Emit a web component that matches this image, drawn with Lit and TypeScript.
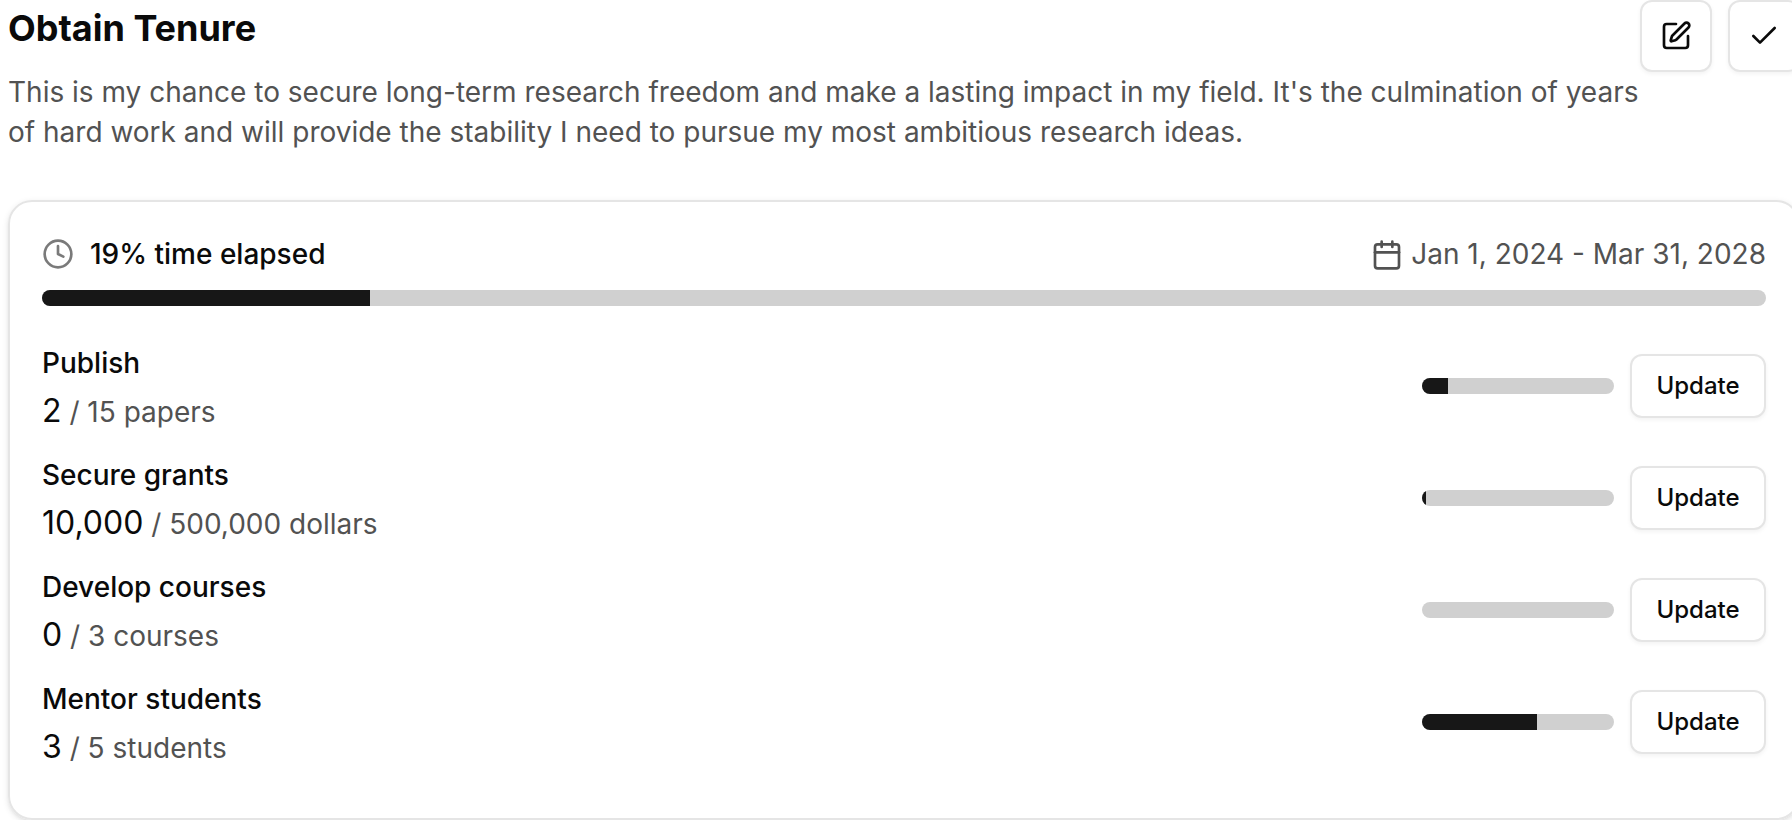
import { LitElement, html, css, svg } from "lit";
import { customElement, property } from "lit/decorators.js";

interface Goal {
  name: string;
  current: number;
  target: number;
  unit: string;
}

const goals: Goal[] = [
  { name: "Publish", current: 2, target: 15, unit: "papers" },
  { name: "Secure grants", current: 10000, target: 500000, unit: "dollars" },
  { name: "Develop courses", current: 0, target: 3, unit: "courses" },
  { name: "Mentor students", current: 3, target: 5, unit: "students" },
];

const icons = {
  edit: svg`<path d="M12 3H5a2 2 0 0 0-2 2v14a2 2 0 0 0 2 2h14a2 2 0 0 0 2-2v-7"/><path d="M18.375 2.625a1 1 0 0 1 3 3l-9.013 9.014a2 2 0 0 1-.853.505l-2.873.84a.5.5 0 0 1-.62-.62l.84-2.873a2 2 0 0 1 .506-.852z"/>`,
  check: svg`<path d="M20 6 9 17l-5-5"/>`,
  clock: svg`<circle cx="12" cy="12" r="10"/><path d="M12 6v6l4 2"/>`,
  calendar: svg`<path d="M8 2v4M16 2v4"/><rect width="18" height="18" x="3" y="4" rx="2"/><path d="M3 10h18"/>`,
};

const icon = (name: keyof typeof icons) => html`<svg class="icon ${name}" viewBox="0 0 24 24" aria-hidden="true">${icons[name]}</svg>`;

const format = (n: number) => n.toLocaleString("en-US");

@customElement("progress-bar")
export class ProgressBar extends LitElement {
  static styles = css`
    :host {
      display: block;
    }
    .track {
      height: 16px;
      border-radius: 8px;
      overflow: hidden;
      background: #d0d0d0;
    }
    .fill {
      height: 100%;
      background: #171717;
    }
  `;

  @property({ type: Number }) value = 0;
  @property() label = "";

  render() {
    return html`<div class="track" role="progressbar" aria-label=${this.label} aria-valuemin="0" aria-valuemax="100" aria-valuenow=${Math.round(this.value)}>
      <div class="fill" style="width:${this.value}%"></div>
    </div>`;
  }
}

@customElement("app-root")
export class AppRoot extends LitElement {
  static styles = css`
    :host {
      display: block;
      overflow: hidden;
      background: #fff;
      color: #0a0a0a;
      font: 400 28px/40px Inter, sans-serif;
      font-optical-sizing: none;
    }
    * {
      box-sizing: border-box;
    }
    .page {
      width: 100%;
      margin-left: 8px;
      display: grid;
      gap: 48px;
    }
    .header {
      display: flex;
      align-items: flex-start;
    }
    .intro {
      flex: 1;
      min-width: 0;
      display: grid;
      gap: 16px;
    }
    h1,
    h2,
    p {
      margin: 0;
    }
    h1 {
      font-size: 36px;
      line-height: 56px;
      font-weight: 700;
    }
    .muted {
      color: #525252;
    }
    .actions {
      display: flex;
      gap: 16px;
    }
    button {
      font: inherit;
      color: inherit;
      background: #fff;
      border: 2px solid #e5e5e5;
      border-radius: 12px;
      box-shadow: 0 2px 4px rgba(0, 0, 0, 0.05);
    }
    .square {
      width: 72px;
      height: 72px;
      padding: 0;
      display: grid;
      place-items: center;
    }
    .update {
      min-width: 136px;
      height: 64px;
      padding: 0 24px;
      font-size: 24px;
      line-height: 32px;
      font-weight: 500;
    }
    .icon {
      display: block;
      flex: none;
      width: 32px;
      height: 32px;
      fill: none;
      stroke: currentColor;
      stroke-width: 2;
      stroke-linecap: round;
      stroke-linejoin: round;
    }
    .clock {
      color: #7a7a7a;
    }
    .card {
      border: 2px solid #e5e5e5;
      border-radius: 24px;
      padding: 32px 32px 48px;
      box-shadow: 0 2px 6px rgba(0, 0, 0, 0.1), 0 2px 4px -2px rgba(0, 0, 0, 0.1);
      display: grid;
      gap: 32px;
    }
    .timeline {
      display: grid;
      gap: 16px;
    }
    .summary {
      display: flex;
      justify-content: space-between;
    }
    .elapsed {
      display: flex;
      align-items: center;
      gap: 16px;
      font-weight: 500;
    }
    .calendar {
      display: inline-block;
      vertical-align: text-bottom;
    }
    .goals {
      list-style: none;
      margin: 0;
      padding: 0;
      display: grid;
      gap: 16px;
    }
    .goal {
      display: flex;
      align-items: center;
      justify-content: space-between;
    }
    .goal h2 {
      font-size: 28px;
      line-height: 50px;
      font-weight: 500;
    }
    .amount {
      font-size: 32px;
      line-height: 46px;
    }
    .target {
      font-size: 28px;
      line-height: 40px;
    }
    .controls {
      display: flex;
      align-items: center;
      gap: 16px;
    }
    .meter {
      width: 192px;
    }
  `;

  private renderGoal(goal: Goal) {
    return html`<li class="goal">
      <div>
        <h2>${goal.name}</h2>
        <p class="amount">${format(goal.current)}<span class="target muted"> / ${format(goal.target)} ${goal.unit}</span></p>
      </div>
      <div class="controls">
        <progress-bar class="meter" label=${goal.name} .value=${(goal.current / goal.target) * 100}></progress-bar>
        <button class="update" type="button">Update</button>
      </div>
    </li>`;
  }

  render() {
    return html`<main class="page">
      <header class="header">
        <div class="intro">
          <h1>Obtain Tenure</h1>
          <p class="muted">This is my chance to secure long-term research freedom and make a lasting impact in my field. It's the culmination of years of hard work and will provide the stability I need to pursue my most ambitious research ideas.</p>
        </div>
        <div class="actions">
          <button class="square" type="button" aria-label="Edit">${icon("edit")}</button>
          <button class="square" type="button" aria-label="Complete">${icon("check")}</button>
        </div>
      </header>
      <section class="card">
        <div class="timeline">
          <div class="summary">
            <span class="elapsed">${icon("clock")}19% time elapsed</span>
            <span class="muted">${icon("calendar")} Jan 1, 2024 - Mar 31, 2028</span>
          </div>
          <progress-bar label="Time elapsed" .value=${19}></progress-bar>
        </div>
        <ul class="goals">${goals.map((goal) => this.renderGoal(goal))}</ul>
      </section>
    </main>`;
  }
}
